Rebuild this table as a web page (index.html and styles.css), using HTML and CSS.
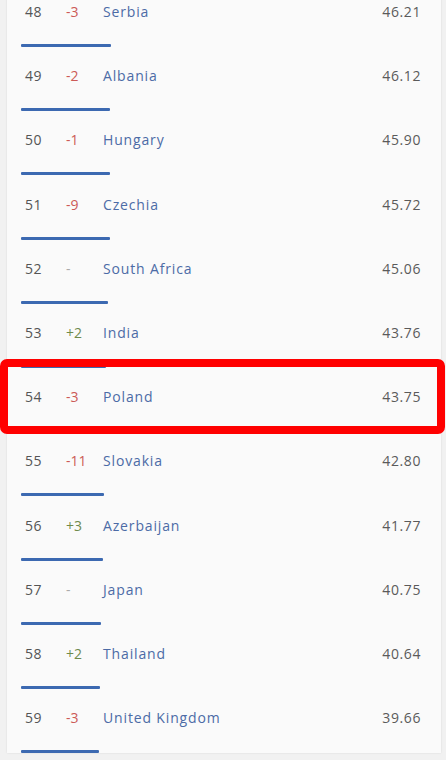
FILE: index.html
```html
<!DOCTYPE html>
<html lang="en">
<head>
<meta charset="utf-8">
<title>Ranking</title>
<link rel="stylesheet" href="styles.css">
</head>
<body>
<main class="card">
  <ol class="list">
    <li class="row"><div class="cells"><span class="rank">48</span><span class="chg neg">-3</span><a class="country">Serbia</a><span class="score">46.21</span></div><div class="bar" style="width:90px"></div></li>
    <li class="row"><div class="cells"><span class="rank">49</span><span class="chg neg">-2</span><a class="country">Albania</a><span class="score">46.12</span></div><div class="bar" style="width:89px"></div></li>
    <li class="row"><div class="cells"><span class="rank">50</span><span class="chg neg">-1</span><a class="country">Hungary</a><span class="score">45.90</span></div><div class="bar" style="width:89px"></div></li>
    <li class="row"><div class="cells"><span class="rank">51</span><span class="chg neg">-9</span><a class="country">Czechia</a><span class="score">45.72</span></div><div class="bar" style="width:89px"></div></li>
    <li class="row"><div class="cells"><span class="rank">52</span><span class="chg same">-</span><a class="country">South Africa</a><span class="score">45.06</span></div><div class="bar" style="width:87px"></div></li>
    <li class="row"><div class="cells"><span class="rank">53</span><span class="chg pos">+2</span><a class="country">India</a><span class="score">43.76</span></div><div class="bar" style="width:85px"></div></li>
    <li class="row highlight"><div class="cells"><span class="rank">54</span><span class="chg neg">-3</span><a class="country">Poland</a><span class="score">43.75</span></div><div class="bar" style="width:85px"></div></li>
    <li class="row"><div class="cells"><span class="rank">55</span><span class="chg neg">-11</span><a class="country">Slovakia</a><span class="score">42.80</span></div><div class="bar" style="width:83px"></div></li>
    <li class="row"><div class="cells"><span class="rank">56</span><span class="chg pos">+3</span><a class="country">Azerbaijan</a><span class="score">41.77</span></div><div class="bar" style="width:82px"></div></li>
    <li class="row"><div class="cells"><span class="rank">57</span><span class="chg same">-</span><a class="country">Japan</a><span class="score">40.75</span></div><div class="bar" style="width:80px"></div></li>
    <li class="row"><div class="cells"><span class="rank">58</span><span class="chg pos">+2</span><a class="country">Thailand</a><span class="score">40.64</span></div><div class="bar" style="width:79px"></div></li>
    <li class="row"><div class="cells"><span class="rank">59</span><span class="chg neg">-3</span><a class="country">United Kingdom</a><span class="score">39.66</span></div><div class="bar" style="width:78px"></div></li>
  </ol>
</main>
</body>
</html>
```

FILE: styles.css
```css
html, body {
  margin: 0;
  padding: 0;
}
body {
  background: #f1f1f1;
  font-family: "Open Sans", "Liberation Sans", sans-serif;
  font-size: 14px;
  overflow: hidden;
  height: 760px;
}
.card {
  margin: 0 5px 0 7px;
  background: #fafafa;
  box-shadow: 0 0 2px rgba(0, 0, 0, 0.10);
  min-height: 760px;
}
.list {
  list-style: none;
  margin: -17.2px 0 0 0;
  padding: 0;
}
.row {
  position: relative;
  padding: 19.2px 0 0 14px;
}
.cells {
  display: flex;
  align-items: center;
  height: 20px;
  line-height: 20px;
  padding: 0 20px 0 4px;
}
.rank {
  width: 41px;
  color: #555;
  letter-spacing: 0.4px;
}
.chg {
  width: 37px;
}
.neg { color: #cc5a57; }
.pos { color: #6f8a4c; }
.same { color: #aaa; }
.country {
  flex: 1;
  color: #4c6ba6;
  letter-spacing: 0.85px;
}
.score {
  color: #5a5a5a;
  letter-spacing: 0.6px;
}
.bar {
  margin-top: 22px;
  height: 3px;
  background: #3c69b1;
  border-radius: 1px;
}
.highlight::after {
  content: "";
  position: absolute;
  top: -8.8px;
  left: -7px;
  right: -4px;
  height: 75px;
  box-sizing: border-box;
  border: 8px solid #ff0000;
  border-radius: 7px;
}
```
